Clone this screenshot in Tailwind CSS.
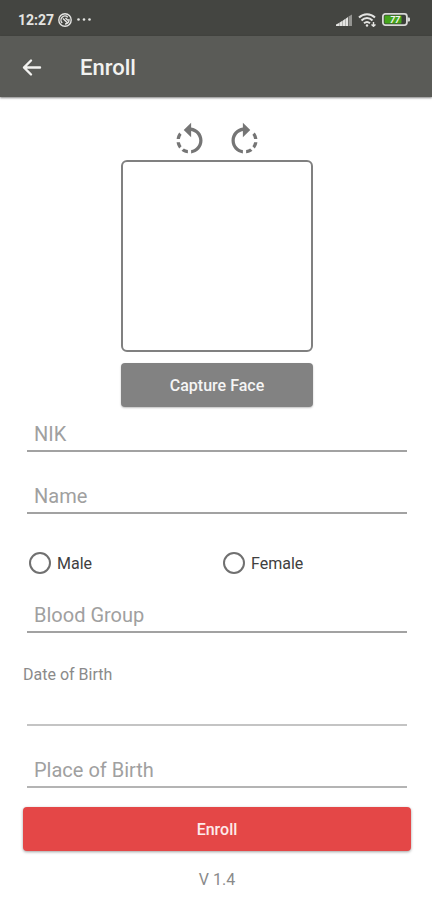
<!DOCTYPE html>
<html lang="en">
<head>
<meta charset="utf-8">
<meta name="viewport" content="width=device-width, initial-scale=1">
<title>Enroll</title>
<script src="https://cdn.jsdelivr.net/npm/@tailwindcss/browser@4"></script>
</head>
<body class="min-h-screen bg-white font-[Roboto,sans-serif] text-[#8a8a8a]">
<div class="flex h-9 items-center justify-between bg-[#444541] pt-[3px] pr-[22px] pl-[18px] text-[#e4e4e2]">
  <div class="flex items-center gap-1">
    <span class="text-sm font-bold">12:27</span>
    <svg class="size-[14px]" viewBox="0 0 14 14" fill="none" stroke="currentColor" stroke-width="1.400" aria-hidden="true"><circle cx="7" cy="7" r="6.200"/><path d="M4.200 10A4 4 0 0 1 9.800 4.200M10.900 6A4 4 0 0 1 7 11M5 5.500l5 5M7.500 5l2.500 2.500"/></svg>
    <svg class="h-[3px] w-4" viewBox="0 0 16 3" fill="currentColor" aria-hidden="true"><circle cx="2.500" cy="1.500" r="1.300"/><circle cx="8" cy="1.500" r="1.300"/><circle cx="13.500" cy="1.500" r="1.300"/></svg>
  </div>
  <div class="flex items-center gap-[6px]">
    <svg class="h-3 w-4" viewBox="0 0 16 12" fill="currentColor" aria-hidden="true"><path d="M0 12V10.500L3 9V12zM3.300 12V8.800L6 7V12zM6.300 12V6.900L9 5V12zM9.300 12V4.900L12 3V12z"/><path d="M12.500 12V2.600L16 .5V12z" opacity=".5"/></svg>
    <svg class="h-[14px] w-[18px]" viewBox="0 0 18 14" fill="none" stroke="currentColor" stroke-width="2" aria-hidden="true"><path d="M1 4.500C5.500.2 12.500.2 17 4.500M3.500 7.500C6.800 4.200 11.200 4.200 14.500 7.500M6 10.200c2-1.700 4-1.700 6 0"/><circle cx="9" cy="12.500" r="1.200" fill="currentColor" stroke="none"/><path d="M15.500 9v4M13.500 11.500l2 1.800 2-1.800" stroke-width="1.400"/></svg>
    <svg class="h-[13px] w-7" viewBox="0 0 28 13" aria-hidden="true"><rect x=".9" y=".9" width="24" height="11.200" rx="2.500" fill="#3c3f3a" stroke="#d8d8d6" stroke-width="1.800"/><rect x="2.500" y="2.500" width="17" height="8" rx="1" fill="#45a51b"/><path d="M25.500 4.500h1.500q1 0 1 1v2q0 1-1 1h-1.500z" fill="#d8d8d6"/><text x="13" y="9.800" text-anchor="middle" font-size="9" font-weight="700" font-style="italic" font-family="Roboto, sans-serif" fill="#f4f4f4">77</text></svg>
  </div>
</div>
<header class="flex h-[61px] items-center gap-9 bg-[#5a5b57] px-5 pt-[2px] text-[#f2f2f0] shadow-[0_1px_2px_#00000080]">
  <button type="button" aria-label="Back" class="size-6"><svg class="size-6" viewBox="0 0 24 24" fill="none" stroke="currentColor" stroke-width="2.400" stroke-linecap="round" stroke-linejoin="round"><path d="M20 11.500H4M11 4.500l-7 7 7 7"/></svg></button>
  <h1 class="pt-px text-[22px] leading-7 font-medium">Enroll</h1>
</header>
<main class="pt-6 pr-[21px] pl-[23px]">
  <form>
    <div class="flex justify-center gap-4 text-[#757575]">
      <button type="button" aria-label="Rotate left"><svg class="size-[39px] -scale-x-100" viewBox="0 0 24 24" fill="currentColor"><path d="M15.550 5.550L11 1v3.070C7.060 4.560 4 7.920 4 12s3.050 7.440 7 7.930v-2.020c-2.840-.48-5-2.940-5-5.910s2.160-5.430 5-5.910V10l4.550-4.450zM19.930 11c-.17-1.390-.72-2.730-1.620-3.890l-1.420 1.420c.54.75.88 1.600 1.020 2.470h2.020zM13 17.900v2.020c1.390-.17 2.740-.71 3.900-1.610l-1.440-1.440c-.75.54-1.590.89-2.460 1.030zm3.890-2.420l1.420 1.410c.9-1.160 1.450-2.500 1.620-3.890h-2.020c-.14.87-.48 1.720-1.020 2.480z"/></svg></button>
      <button type="button" aria-label="Rotate right"><svg class="size-[39px]" viewBox="0 0 24 24" fill="currentColor"><path d="M15.550 5.550L11 1v3.070C7.060 4.560 4 7.920 4 12s3.050 7.440 7 7.930v-2.020c-2.840-.48-5-2.940-5-5.910s2.160-5.430 5-5.910V10l4.550-4.450zM19.930 11c-.17-1.390-.72-2.730-1.620-3.890l-1.420 1.420c.54.75.88 1.600 1.020 2.470h2.020zM13 17.900v2.020c1.390-.17 2.740-.71 3.900-1.610l-1.440-1.440c-.75.54-1.590.89-2.460 1.030zm3.890-2.420l1.420 1.410c.9-1.160 1.450-2.500 1.620-3.890h-2.020c-.14.87-.48 1.720-1.020 2.480z"/></svg></button>
    </div>
    <div class="mx-auto size-48 rounded-md border-2 border-[#808080]"></div>
    <button type="button" class="mx-auto mt-[11px] block h-11 w-48 rounded bg-[#828282] pt-[2px] text-base font-medium text-[#f5f5f5] shadow-[0_1px_2px_#00000040]">Capture Face</button>
    <div class="px-1">
      <input aria-label="NIK" placeholder="NIK" class="mt-3 block h-[33px] w-full border-b-2 border-[#a2a2a2] px-[7px] pb-px text-xl outline-none placeholder:text-[#a0a0a0]">
      <input aria-label="Name" placeholder="Name" class="mt-[29px] block h-[33px] w-full border-b-2 border-[#a2a2a2] px-[7px] pb-px text-xl outline-none placeholder:text-[#a0a0a0]">
    </div>
    <fieldset class="mt-9 grid h-6 grid-cols-2 text-base text-[#404040]">
      <label class="flex items-center gap-[6px] pl-[6px]"><input type="radio" name="gender" class="size-[22px] appearance-none rounded-full border-2 border-[#707070] checked:border-[6px]"><span class="pt-[2px]">Male</span></label>
      <label class="flex items-center gap-[6px] pl-[6px]"><input type="radio" name="gender" class="size-[22px] appearance-none rounded-full border-2 border-[#707070] checked:border-[6px]"><span class="pt-[2px]">Female</span></label>
    </fieldset>
    <div class="px-1">
      <input aria-label="Blood Group" placeholder="Blood Group" class="mt-[26px] block h-[33px] w-full border-b-2 border-[#a2a2a2] px-[7px] pb-px text-xl outline-none placeholder:text-[#a0a0a0]">
    </div>
    <label for="dob" class="mt-8 block text-base leading-5">Date of Birth</label>
    <div class="px-1">
      <input id="dob" class="mt-2 block h-[33px] w-full border-b-2 border-[#c4c4c4] px-[7px] pb-px text-xl outline-none">
      <input aria-label="Place of Birth" placeholder="Place of Birth" class="mt-[29px] block h-[33px] w-full border-b-2 border-[#b4b4b4] px-[7px] pb-px text-xl outline-none placeholder:text-[#a0a0a0]">
    </div>
    <button type="submit" class="mt-[19px] block h-11 w-full rounded bg-[#e44747] pt-[2px] text-base font-medium text-[#fdeaea] shadow-[0_1px_3px_#00000060]">Enroll</button>
  </form>
  <p class="mt-[19px] text-center text-base leading-5">V 1.4</p>
</main>
</body>
</html>
